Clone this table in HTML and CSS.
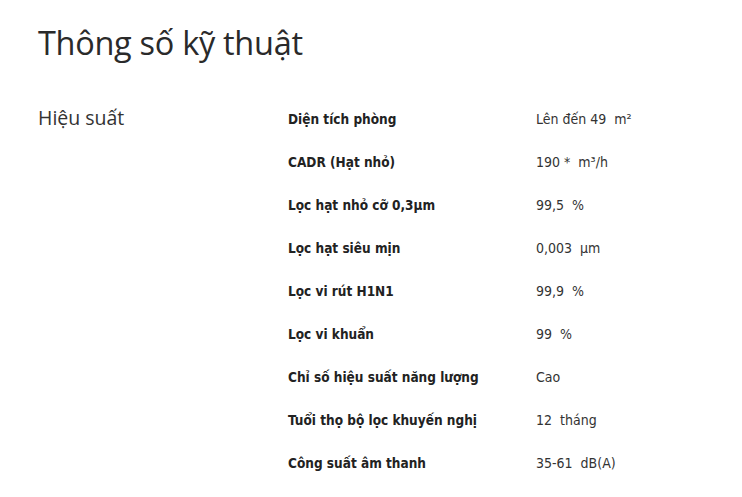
FILE: index.html
```html
<!DOCTYPE html>
<html lang="vi">
<head>
<meta charset="utf-8">
<link rel="stylesheet" href="styles.css">
</head>
<body>
<div class="page">
  <h1 class="title">Thông số kỹ thuật</h1>
  <section class="section">
    <h2 class="section-title">Hiệu suất</h2>
    <div class="specs">
      <div class="row"><div class="label">Diện tích phòng</div><div class="value">Lên đến 49&nbsp; m²</div></div>
      <div class="row"><div class="label">CADR (Hạt nhỏ)</div><div class="value">190 *&nbsp; m³/h</div></div>
      <div class="row"><div class="label">Lọc hạt nhỏ cỡ 0,3μm</div><div class="value">99,5&nbsp; %</div></div>
      <div class="row"><div class="label">Lọc hạt siêu mịn</div><div class="value">0,003&nbsp; μm</div></div>
      <div class="row"><div class="label">Lọc vi rút H1N1</div><div class="value">99,9&nbsp; %</div></div>
      <div class="row"><div class="label">Lọc vi khuẩn</div><div class="value">99&nbsp; %</div></div>
      <div class="row"><div class="label">Chỉ số hiệu suất năng lượng</div><div class="value">Cao</div></div>
      <div class="row"><div class="label">Tuổi thọ bộ lọc khuyến nghị</div><div class="value">12&nbsp; tháng</div></div>
      <div class="row"><div class="label">Công suất âm thanh</div><div class="value">35-61&nbsp; dB(A)</div></div>
    </div>
  </section>
</div>
</body>
</html>
```
FILE: styles.css
```css
html, body { margin: 0; padding: 0; background: #fff; }
body { color: #222; font-family: "DejaVu Sans Condensed", "DejaVu Sans", Verdana, sans-serif; }
.page { padding: 20px 38px 0 38px; }
.title {
  margin: 0;
  font-family: "Open Sans", "Noto Sans", sans-serif;
  font-weight: 400;
  font-size: 32.5px;
  line-height: 46px;
  color: #2a2a2a;
  letter-spacing: -0.3px;
}
.section { display: grid; grid-template-columns: 250px 1fr; margin-top: 32px; }
.section-title {
  margin: 0;
  font-family: "Open Sans", "Noto Sans", sans-serif;
  font-weight: 400;
  font-size: 19.5px;
  line-height: 30px;
  color: #333;
  padding-top: 5px;
}
.specs { display: grid; grid-template-columns: 248px 1fr; }
.row { display: contents; }
.label, .value { line-height: 43px; height: 43px; }
.label { font-weight: 700; color: #222; font-size: 13.5px; }
.value { color: #333; font-size: 14px; }
```
